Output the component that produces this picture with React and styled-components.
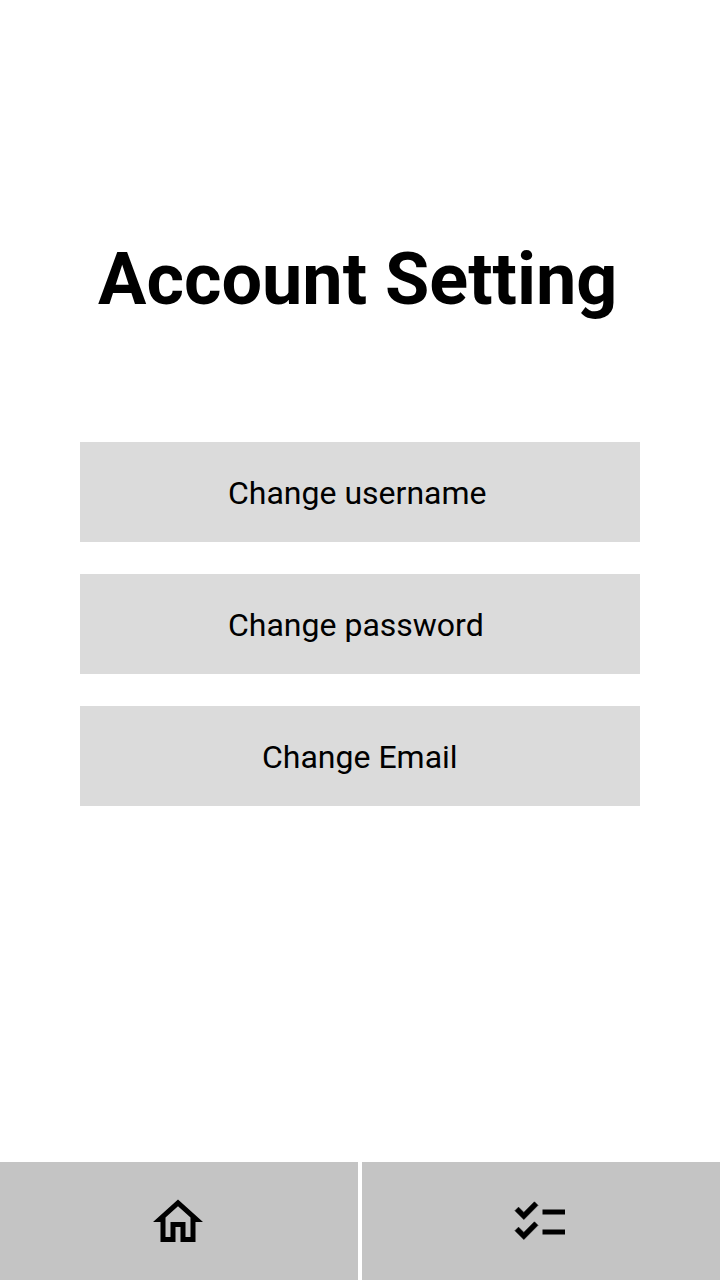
import React from "react";
import styled, { createGlobalStyle } from "styled-components";

const GlobalStyle = createGlobalStyle`
  *, *::before, *::after { box-sizing: border-box; }
  body { margin: 0; background: #fff; }
`;

const Screen = styled.div`
  display: flex;
  flex-direction: column;
  height: 1280px;
  background: #fff;
  color: #000;
  font-family: Roboto, "Liberation Sans", sans-serif;
`;

const Content = styled.main`
  flex: 1;
  padding: 238px 80px 0;
`;

const Title = styled.h1`
  margin: 0 0 120px;
  padding-left: 18px;
  font-size: 72px;
  line-height: 84px;
  font-weight: 700;
  white-space: nowrap;
`;

const Options = styled.div`
  display: flex;
  flex-direction: column;
  gap: 32px;
`;

const OptionButton = styled.button`
  height: 100px;
  padding: 2px 0 0 ${({ $inset }) => $inset}px;
  border: 0;
  background: #dbdbdb;
  color: #000;
  font-family: inherit;
  font-size: 32px;
  line-height: 38px;
  text-align: left;
`;

const TabBar = styled.nav`
  display: grid;
  grid-template-columns: 1fr 1fr;
  gap: 4px;
  height: 118px;
`;

const Tab = styled.button`
  display: flex;
  align-items: center;
  justify-content: center;
  padding: 2px 2px 0 0;
  border: 0;
  background: #c4c4c4;
  color: #000;
`;

const Icon = styled.svg`
  display: block;
  width: 60px;
  height: 60px;
  fill: currentColor;
`;

export default function App() {
  return (
    <Screen>
      <GlobalStyle />
      <Content>
        <Title>Account Setting</Title>
        <Options>
          <OptionButton $inset={148}>Change username</OptionButton>
          <OptionButton $inset={148}>Change password</OptionButton>
          <OptionButton $inset={182}>Change Email</OptionButton>
        </Options>
      </Content>
      <TabBar>
        <Tab aria-label="Home">
          <Icon viewBox="0 0 24 24">
            <path d="M12 5.69l5 4.5V18h-2v-6H9v6H7v-7.81l5-4.5M12 3L2 12h3v8h6v-6h2v6h6v-8h3L12 3z" />
          </Icon>
        </Tab>
        <Tab aria-label="Checklist">
          <Icon viewBox="0 0 24 24">
            <path d="M22 7h-9v2h9V7zm0 8h-9v2h9v-2z" />
            <path
              stroke="currentColor"
              strokeWidth="0.25"
              d="M5.54 11L2 7.46l1.41-1.41 2.12 2.12 4.24-4.24 1.41 1.41L5.54 11zm0 8L2 15.46l1.41-1.41 2.12 2.12 4.24-4.24 1.41 1.41L5.54 19z"
            />
          </Icon>
        </Tab>
      </TabBar>
    </Screen>
  );
}
